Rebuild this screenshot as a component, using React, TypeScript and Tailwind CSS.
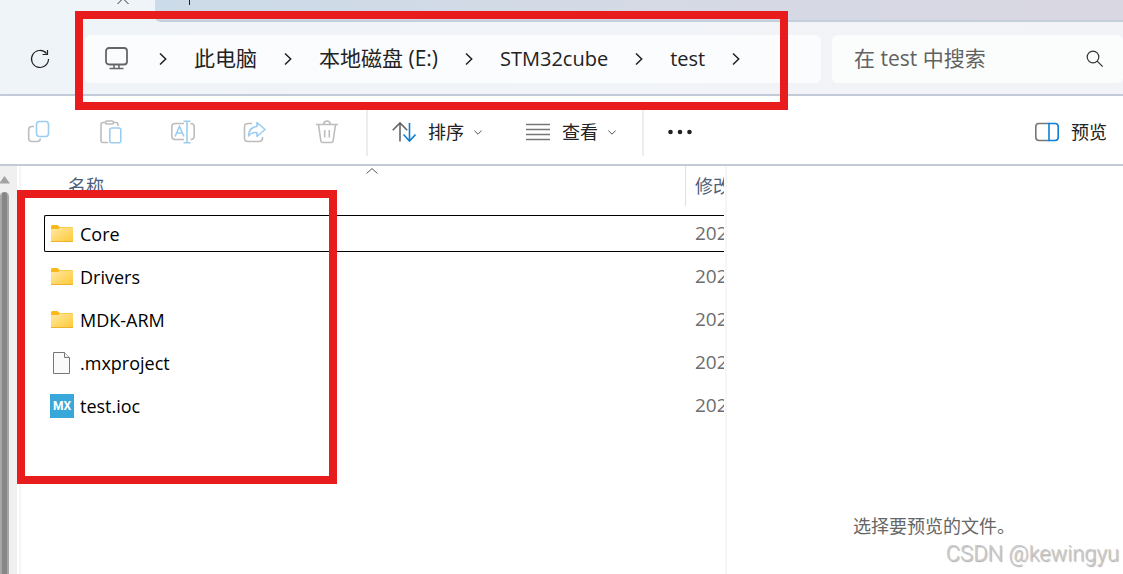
import type { ReactNode } from 'react'
import clsx from 'clsx'

type FileKind = 'folder' | 'file' | 'ioc'

interface FileEntry {
  name: string
  kind: FileKind
  modified: string
}

const crumbs = ['此电脑', '本地磁盘 (E:)', 'STM32cube', 'test']

const files: FileEntry[] = [
  { name: 'Core', kind: 'folder', modified: '202' },
  { name: 'Drivers', kind: 'folder', modified: '202' },
  { name: 'MDK-ARM', kind: 'folder', modified: '202' },
  { name: '.mxproject', kind: 'file', modified: '202' },
  { name: 'test.ioc', kind: 'ioc', modified: '202' },
]

const hasHan = (text: string) => /[\u4e00-\u9fff]/.test(text)

function Icon({ children, className }: { children: ReactNode; className?: string }) {
  return (
    <svg
      viewBox="0 0 24 24"
      className={clsx('size-6 shrink-0', className)}
      fill="none"
      stroke="currentColor"
      strokeWidth="1.6"
      aria-hidden="true"
    >
      {children}
    </svg>
  )
}

function ChevronRight() {
  return (
    <svg viewBox="0 0 8 12" className="h-3 w-2 shrink-0" fill="none" stroke="#222" strokeWidth="1.5" aria-hidden="true">
      <path d="M1 .5 6.7 6 1 11.5" />
    </svg>
  )
}

function ChevronDown() {
  return (
    <svg viewBox="0 0 8 5" className="h-[5px] w-2 shrink-0" fill="none" stroke="#555" aria-hidden="true">
      <path d="M.3.5 4 4.2 7.7.5" />
    </svg>
  )
}

function FileIcon({ kind }: { kind: FileKind }) {
  if (kind === 'ioc') {
    return (
      <svg viewBox="0 0 24 24" className="size-6 shrink-0" aria-hidden="true">
        <rect width="24" height="24" fill="#38a8da" />
        <text
          x="12"
          y="16"
          textAnchor="middle"
          fill="#fff"
          className="font-['Roboto',sans-serif] text-[12px] font-bold"
        >
          MX
        </text>
      </svg>
    )
  }
  if (kind === 'file') {
    return (
      <svg viewBox="0 0 24 24" className="size-6 shrink-0" fill="#fafafa" stroke="#777" aria-hidden="true">
        <path d="M3.5 1.5h11l5 5v16h-16z" />
        <path d="M14.5 1.5v5h5" fill="#eee" />
      </svg>
    )
  }
  return (
    <svg viewBox="0 0 24 24" className="size-6 shrink-0" aria-hidden="true">
      <defs>
        <linearGradient id="folder" x1="0" y1="0" x2="1" y2="1">
          <stop offset="0" stopColor="#ffe9a6" />
          <stop offset="1" stopColor="#ffca3a" />
        </linearGradient>
      </defs>
      <path d="M1 4.500q0-1.500 1.500-1.500h5l2 2h12q1.500 0 1.500 1v4H1z" fill="#fcb816" />
      <path d="M1 7h7l2-1.500h13V19H1z" fill="url(#folder)" />
      <path d="M1 19.500h22" stroke="#eeb12a" />
    </svg>
  )
}

function ToolButton({ label, children }: { label: string; children: ReactNode }) {
  return (
    <button type="button" aria-label={label} className="text-[#bdbdbd]">
      <Icon>{children}</Icon>
    </button>
  )
}

function TabStrip() {
  return (
    <div className="flex h-[22px] overflow-hidden bg-[#eff4f8]">
      <div className="flex w-[155px] shrink-0 justify-end pr-[26px]">
        <button type="button" aria-label="关闭" className="h-1">
          <svg viewBox="0 0 12 4" className="h-1 w-3" fill="none" stroke="#333" aria-hidden="true">
            <path d="M.5 4 6-1.5 11.5 4" />
          </svg>
        </button>
      </div>
      <div className="flex-1 rounded-bl-md border-b-2 border-[#c5cedb] bg-linear-to-r from-[#ccdbe9] via-[#d5dae5] to-[#d9d7e2] pl-[34px]">
        <button type="button" aria-label="新建" className="block h-[5px] w-px bg-[#222]" />
      </div>
    </div>
  )
}

function AddressBar() {
  return (
    <div className="flex h-[74px] items-center border-b-2 border-[#c3cbd8] bg-linear-to-r from-[#eff4f8] to-[#f2f3f7] pt-[2px]">
      <button type="button" aria-label="刷新" className="flex w-[85px] shrink-0 pl-7">
        <Icon className="text-[#222]">
          <path d="M18.5 6.500A8.500 8.500 0 1 0 20.500 12" strokeWidth="1.200" />
          <path d="M19.500 3v4.500h-5" strokeWidth="1.200" />
        </Icon>
      </button>
      <nav className="flex h-12 min-w-0 flex-1 items-center overflow-hidden rounded-md bg-[#fbfcfe] pl-5 text-xl whitespace-nowrap text-[#222]">
        <Icon className="mr-[30px] text-[#666]">
          <rect x="1" y="1" width="21" height="16.500" rx="3" strokeWidth="1.800" />
          <path d="M9 18v4M14 18v4M4.500 21.500h14" strokeWidth="1.500" />
        </Icon>
        <ChevronRight />
        {crumbs.map(crumb => (
          <div key={crumb} className="flex items-center">
            <a href="#" className={clsx('px-[27px]', hasHan(crumb) && 'text-[21px]')}>{crumb}</a>
            <ChevronRight />
          </div>
        ))}
      </nav>
      <label className="ml-[11px] flex h-12 w-[291px] shrink-0 items-center rounded-md bg-[#fbfdfd] pr-[19px] pl-[22px]">
        <input
          type="search"
          aria-label="搜索"
          placeholder="在 test 中搜索"
          className="min-w-0 flex-1 text-[21px] outline-none placeholder:text-[#626262]"
        />
        <svg viewBox="0 0 18 18" className="size-[18px]" fill="none" stroke="#333" strokeWidth="1.200" aria-hidden="true">
          <circle cx="7" cy="7" r="5.800" />
          <path d="m11.200 11.200 5.500 5.500" />
        </svg>
      </label>
    </div>
  )
}

function Toolbar() {
  return (
    <div className="flex h-[70px] items-center border-b-2 border-[#c3cad6] bg-white pt-1 pr-4 text-lg text-[#222]">
      <div className="flex gap-12 pr-[27px] pl-[27px]">
        <ToolButton label="复制">
          <path d="M7 6.500H5q-3.300 0-3.300 3.300v8.400q0 3.300 3.300 3.300h5q3.300 0 3.300-3" />
          <rect x="9.500" y="1.500" width="12" height="15" rx="3" stroke="#9ccdf1" />
        </ToolButton>
        <ToolButton label="粘贴">
          <path d="M7 2.500H4q-2 0-2 2v16q0 2 2 2h5M14 2.500h3q2 0 2 2V6" />
          <rect x="6.500" y="1" width="8" height="3" rx="1.500" />
          <rect x="10.800" y="8" width="11" height="14.800" rx="2" stroke="#9ccdf1" />
        </ToolButton>
        <ToolButton label="重命名">
          <path d="M13 3.500H4Q.8 3.500.8 6.700v9.600q0 3.200 3.200 3.200h9M19.500 3.500q3.700 0 3.700 3.200v9.600q0 3.200-3.700 3.200" />
          <path d="M4 16.500 8.500 6.500 13 16.500M5.500 13h6M12.500 1.200h7M16 1.200v21.500M12.500 22.700h7" stroke="#9ccdf1" />
        </ToolButton>
        <ToolButton label="共享">
          <path d="M9 3.500H5Q1.500 3.500 1.500 7v11q0 3.500 3.500 3.500h11q3.500 0 3.500-3.500v-1" />
          <path d="M14 2.500 22 9.500 14 16.500V12.500Q8.500 12 5.500 16 6 7 14 6.500z" stroke="#9ccdf1" strokeLinejoin="round" />
        </ToolButton>
        <ToolButton label="删除">
          <path d="M1 4.500h22M3.500 4.500 5.800 20.500q.3 2 2.200 2h8q1.900 0 2.200-2L20.500 4.500M8.500 4.300Q9 1 12 1t3.500 3.300M9.700 10v7.500M14.300 10v7.500" />
        </ToolButton>
      </div>
      <div className="h-12 w-[2px] bg-[#ededed]" />
      <button type="button" className="flex items-center pl-6">
        <Icon className="mr-3">
          <path d="M8 21.500V3M.7 10.300 8 3l7.200 7.300" stroke="#666" />
          <path d="M17.500 3v18M11.500 14.500l6 6.500 6-6.500" stroke="#0f7fd5" />
        </Icon>
        <span className="mr-[10px]">排序</span>
        <ChevronDown />
      </button>
      <button type="button" className="flex items-center pl-11">
        <Icon className="mr-3 text-[#777]">
          <path d="M0 4.500h24M0 9.500h24M0 14.500h24M0 19.500h24" />
        </Icon>
        <span className="mr-[10px]">查看</span>
        <ChevronDown />
      </button>
      <div className="ml-[26px] h-12 w-[2px] bg-[#ededed]" />
      <button type="button" aria-label="更多" className="ml-6">
        <Icon className="text-[#222]">
          <g fill="currentColor" stroke="none">
            <circle cx="2.500" cy="12" r="2.300" />
            <circle cx="12" cy="12" r="2.300" />
            <circle cx="21.500" cy="12" r="2.300" />
          </g>
        </Icon>
      </button>
      <button type="button" className="ml-auto flex items-center gap-3">
        <Icon>
          <path d="M14 3.500H4Q.8 3.500.8 6.700v10.600q0 3.200 3.200 3.200h10" stroke="#777" />
          <path d="M14 3.500h6q3.200 0 3.200 3.200v10.600q0 3.200-3.200 3.200h-6z" stroke="#0f7fd5" />
        </Icon>
        预览
      </button>
    </div>
  )
}

function FileTable() {
  return (
    <table className="w-full table-fixed border-separate border-spacing-0 text-lg">
      <thead>
        <tr className="h-[46px] text-left align-top text-[#4c607a]">
          <th className="relative p-0 pl-[47px] font-normal">
            <div className="flex h-10 items-center">名称</div>
            <svg
              viewBox="0 0 12 6"
              className="absolute top-[2px] left-[345px] h-[6px] w-3"
              fill="none"
              stroke="#555"
              aria-hidden="true"
            >
              <path d="M.5 5.500 6 .6l5.500 4.900" />
            </svg>
          </th>
          <th className="w-[39px] p-0 font-normal">
            <div className="flex h-10 items-center overflow-hidden border-l border-[#e0e0e0] pl-[9px] whitespace-nowrap">
              修改
            </div>
          </th>
        </tr>
      </thead>
      <tbody>
        {files.map((file, i) => (
          <tr key={file.name} className="h-[43px]">
            <td className="p-0 pl-[23px]">
              <div
                className={clsx(
                  'flex h-[37px] items-center gap-[6px] rounded-l-xs border-y border-l pl-[5px] text-black',
                  i === 0 ? 'border-black' : 'border-transparent',
                )}
              >
                <FileIcon kind={file.kind} />
                {file.name}
              </div>
            </td>
            <td className="p-0">
              <div
                className={clsx(
                  'flex h-[37px] items-center overflow-hidden border-y pl-[10px] text-[19px] text-[#6d6d6d]',
                  i === 0 ? 'border-black' : 'border-transparent',
                )}
              >
                {file.modified}
              </div>
            </td>
          </tr>
        ))}
      </tbody>
    </table>
  )
}

export default function App() {
  return (
    <div className="relative flex h-screen flex-col overflow-hidden bg-white font-['Open_Sans','Noto_Sans_CJK_SC',sans-serif]">
      <TabStrip />
      <AddressBar />
      <Toolbar />

      <main className="flex min-h-0 flex-1">
        {/* Nav pane scrollbar */}
        <div className="flex w-[17px] shrink-0 flex-col bg-[#f0f0f0] pt-[10px]">
          <svg viewBox="0 0 10 8" className="h-2 w-[10px]" fill="#a3a3a3" aria-hidden="true">
            <path d="M4.500 0 10 7.500H-1z" />
          </svg>
          <div className="mt-2 w-[9px] flex-1 rounded-t-full border-x-2 border-[#a6a6a6] bg-[#868686]" />
        </div>
        <div className="ml-[2px] w-[2px] shrink-0 bg-[#f6f6f6]" />

        <section className="min-w-0 flex-1 overflow-hidden">
          <FileTable />
        </section>

        <aside className="ml-px w-[398px] shrink-0 border-l-2 border-[#f6f6f6] pt-[346px] pl-[18px] text-center text-lg text-[#666]">
          选择要预览的文件。
        </aside>
      </main>

      {/* Highlight frames */}
      <div className="pointer-events-none absolute top-[11px] left-[75px] h-[99px] w-[713px] border-8 border-[#e81c1c]" />
      <div className="pointer-events-none absolute top-[190px] left-[17px] h-[294px] w-[320px] border-8 border-[#e81c1c]" />

      <p className="absolute right-1 bottom-1 font-['Roboto',sans-serif] text-[22px] leading-8 font-light text-[#c8c8c8] [text-shadow:1px_1px_1px_#aaa]">
        CSDN @kewingyu
      </p>
    </div>
  )
}
